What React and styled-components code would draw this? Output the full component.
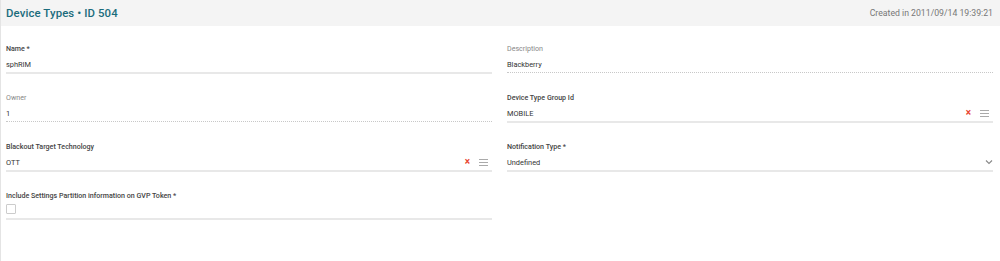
import React from 'react'
import styled, { createGlobalStyle } from 'styled-components'

const GlobalStyle = createGlobalStyle`
	html, body {
		margin: 0;
		padding: 0;
		background: #fff;
		font-family: Roboto, "Liberation Sans", sans-serif;
	}
`

const Page = styled.div`
	min-height: 100vh;
	border-left: 1px solid #e4e4e4;
	box-sizing: border-box;
`

const Header = styled.div`
	height: 26px;
	background: #f4f4f4;
	display: flex;
	align-items: center;
	justify-content: space-between;
	padding: 0 7px 0 5px;
`

const Title = styled.h1`
	margin: 0;
	font-size: 11.4px;
	font-weight: 500;
	color: #1b6c7c;
	letter-spacing: 0.1px;
`

const Created = styled.span`
	font-size: 8.7px;
	color: #777;
`

const Form = styled.div`
	display: grid;
	grid-template-columns: 1fr 1fr;
	column-gap: 15px;
	row-gap: 19px;
	padding: 18px 7px 0 5px;
`

const Field = styled.div`
	display: flex;
	flex-direction: column;
`

const Label = styled.label`
	font-size: 7.1px;
	line-height: 10px;
	font-weight: ${({bold}) => bold ? 500 : 400};
	color: ${({bold}) => bold ? '#444' : '#888'};
	margin-bottom: 4px;
`

const ValueRow = styled.div`
	display: flex;
	align-items: center;
	height: 12px;
	padding-bottom: 2px;
	border-bottom: ${({readOnly}) => readOnly ? '1px dotted #c8c8c8' : '2px solid #e8e8e8'};
	margin-bottom: ${({readOnly}) => readOnly ? '1px' : '0'};
`

const Value = styled.span`
	flex: 1;
	font-size: 7.4px;
	color: #333;
`

const Clear = styled.span`
	color: #e8432e;
	font-size: 10px;
	font-weight: 700;
	line-height: 10px;
	margin-right: 9px;
`

const Menu = styled.span`
	display: flex;
	flex-direction: column;
	gap: 2px;
	width: 9px;
	margin-right: 4px;
	& > i {
		display: block;
		height: 1px;
		background: #aaa;
	}
`

const Chevron = styled.svg`
	width: 8px;
	height: 6px;
	margin-right: 0;
`

const CheckRow = styled.div`
	margin-top: -1px;
	padding: 0 0 4px;
	border-bottom: 2px solid #e8e8e8;
`

const Checkbox = styled.span`
	display: block;
	width: 8px;
	height: 8px;
	border: 1px solid #ccc;
	border-radius: 1px;
	background: #fff;
`

const Lookup = () => (
	<>
		<Clear>×</Clear>
		<Menu><i /><i /><i /></Menu>
	</>
)

const App = () => (
	<Page>
		<GlobalStyle />
		<Header>
			<Title>Device Types • ID 504</Title>
			<Created>Created in 2011/09/14 19:39:21</Created>
		</Header>
		<Form>
			<Field>
				<Label bold>Name *</Label>
				<ValueRow><Value>sphRIM</Value></ValueRow>
			</Field>
			<Field>
				<Label>Description</Label>
				<ValueRow readOnly><Value>Blackberry</Value></ValueRow>
			</Field>
			<Field>
				<Label>Owner</Label>
				<ValueRow readOnly><Value>1</Value></ValueRow>
			</Field>
			<Field>
				<Label bold>Device Type Group Id</Label>
				<ValueRow><Value>MOBILE</Value><Lookup /></ValueRow>
			</Field>
			<Field>
				<Label bold>Blackout Target Technology</Label>
				<ValueRow><Value>OTT</Value><Lookup /></ValueRow>
			</Field>
			<Field>
				<Label bold>Notification Type *</Label>
				<ValueRow>
					<Value>Undefined</Value>
					<Chevron viewBox="0 0 8 6">
						<path d="M1 1.5 L4 4.5 L7 1.5" fill="none" stroke="#888" strokeWidth="1.1" />
					</Chevron>
				</ValueRow>
			</Field>
			<Field>
				<Label bold>Include Settings Partition information on GVP Token *</Label>
				<CheckRow><Checkbox /></CheckRow>
			</Field>
		</Form>
	</Page>
)

export default App
